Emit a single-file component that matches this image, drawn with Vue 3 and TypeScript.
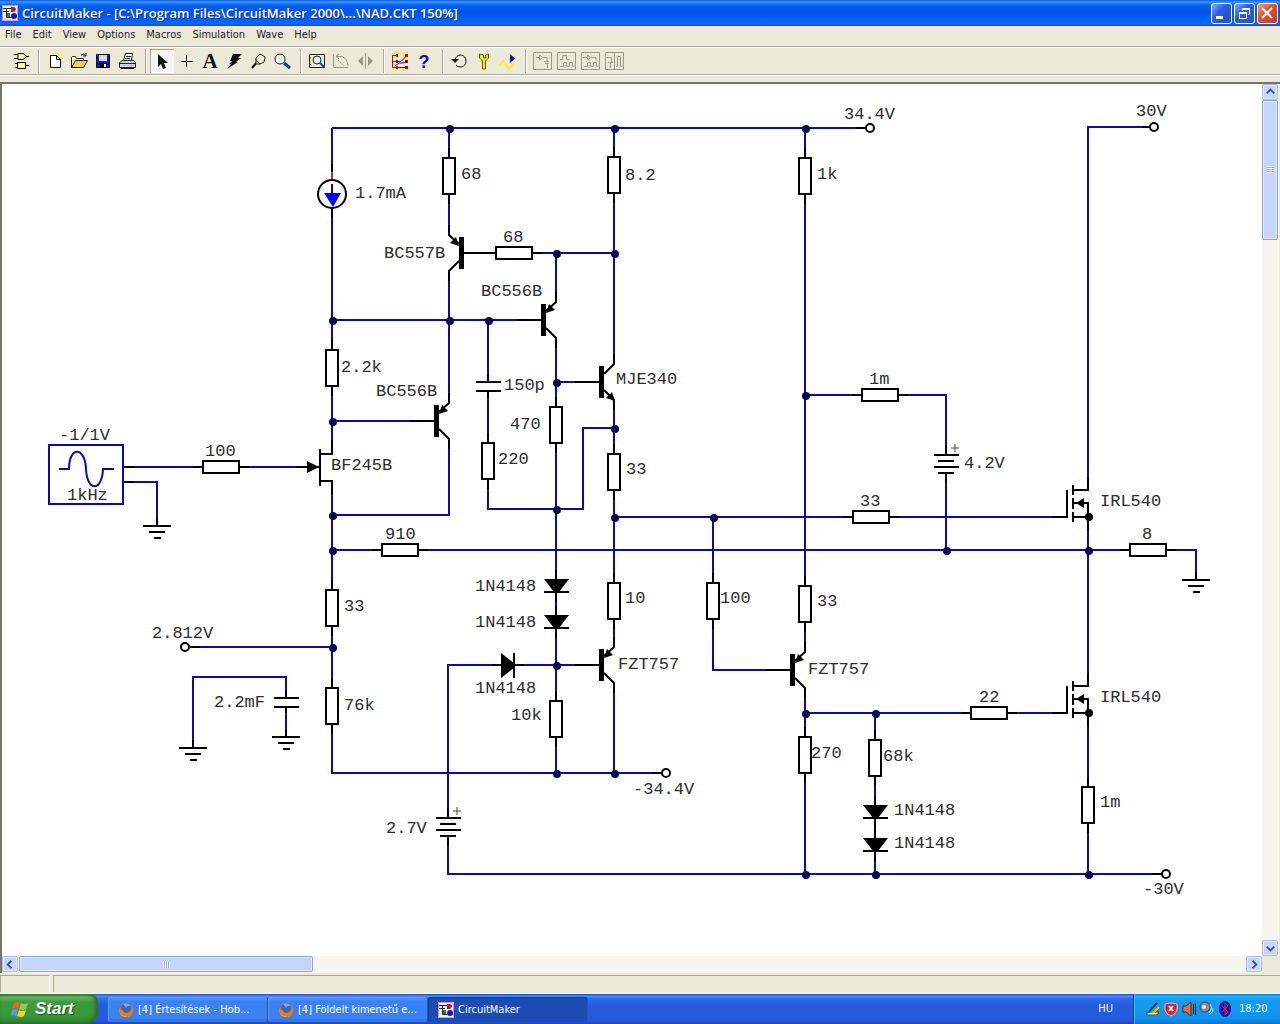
<script setup lang="ts">
type Point = [number, number]

interface Label {
  x: number
  y: number
  text: string
}

interface Tool {
  name: string
  art: string
  pressed?: boolean
}

const menus = ['File', 'Edit', 'View', 'Options', 'Macros', 'Simulation', 'Wave', 'Help']

const waveBox = '<path d="M3.5 3.5h18v17h-18z" fill="none" stroke="#9c9a8c"/>'

const toolGroups: Tool[][] = [
  [
    {
      name: 'Parts',
      art: '<g fill="#ffff9c" stroke="#000"><path d="M10 4.5h5l4 3-4 3h-5zM9.5 13.5h8v6h-8z"/><path fill="none" d="M6 5.5h4M6 9.5h4M19 7.5h2M7 14.5h2M7 18.5h2M18 16.5h3"/></g>',
    },
  ],
  [
    {
      name: 'New',
      art: '<path d="M8 4l3 1M18 4l-2 2M20 9l-2-1M5 9l2 1M6 17l2-1M19 17l-2-1M6 20l2-1" stroke="#ffff20" stroke-width="2"/><path d="M7.5 6.5h6l4 4v8h-10z" fill="#fff" stroke="#000"/><path d="M13.5 6.5v4h4" fill="none" stroke="#000"/>',
    },
    {
      name: 'Open',
      art: '<path d="M4.500 18.5v-10l1-1h3l1 2h7v2" fill="#ffff9c" stroke="#222"/><path d="M4.500 18.5l4-7h12l-4 7z" fill="#e0d858" stroke="#222"/><path d="M14 6q3-2 5 1m0-3v3h-3" fill="none" stroke="#222"/>',
    },
    {
      name: 'Save',
      art: '<path d="M5.5 5.5h13v13h-13z" fill="#1818b0" stroke="#000"/><path d="M8 6h8v6H8z" fill="#d8d8e8"/><path d="M9 14h7v4H9z" fill="#000"/><path d="M13 15h2v3h-2z" fill="#fff"/>',
    },
    {
      name: 'Print',
      art: '<path d="M8.5 11.5l2-7h7l-1 7z" fill="#fff" stroke="#222"/><path d="M11 7.5h5M10 9.5h5" stroke="#222"/><path d="M4.500 13.5l3-2h11l2 2v5h-16z" fill="#d0d0cc" stroke="#222"/><path d="M4 14.5h16M6 19.5h13" fill="none" stroke="#222"/><path d="M15 16.5h3" stroke="#d8c800"/>',
    },
  ],
  [
    { name: 'Select', pressed: true, art: '<path d="M8 5v13l3-3 2 5 3-1-2-5h4z" fill="#111"/>' },
    { name: 'Wire', art: '<path d="M12.5 6v12M7 12.500h12" stroke="#111"/>' },
    {
      name: 'Text',
      art: '<text x="12" y="19" text-anchor="middle" font-family="Liberation Serif, serif" font-size="21" font-weight="bold" fill="#111">A</text>',
    },
    { name: 'Delete', art: '<path d="M11 5h9l-4 4h3l-5 4h2L5 20l4-5H7l3-3H8z" fill="#111"/>' },
    {
      name: 'Probe',
      art: '<path d="M6 19l5-6" stroke="#111" stroke-width="2"/><path d="M10 13v-4l4-4 5 3-1 5-4 2h-4z" fill="#f4f2dc" stroke="#222"/><path d="M10 11l4 4" stroke="#222"/>',
    },
    {
      name: 'Zoom',
      art: '<circle cx="10" cy="10" r="5" fill="#ecf4f0" stroke="#222"/><path d="M14 14l6 5" stroke="#2030b0" stroke-width="3"/>',
    },
  ],
  [
    {
      name: 'Fit to window',
      art: '<path d="M4.500 5.5h15v13h-15zM4 8.5h2M4 15.5h2" fill="none" stroke="#222"/><circle cx="12" cy="11" r="4" fill="#ecf4f0" stroke="#222"/><path d="M15 14l4 4" stroke="#2a4a70" stroke-width="2"/>',
    },
    {
      name: 'Rotate',
      art: '<path d="M4.500 5v13.5h15M7 7.5h6q5 2 6 9M10 5L7 7.500 10 10" fill="none" stroke="#99978a"/><path d="M9 11l6 6" stroke="#99978a" stroke-dasharray="2 1"/>',
    },
    { name: 'Mirror', art: '<path d="M12.5 4v16" stroke="#99978a"/><path d="M10 7v10l-5-5zM15 7v10l5-5z" fill="#99978a"/>' },
  ],
  [
    {
      name: 'Digital mode',
      art: '<path d="M5 4.500l4-1 6 1 5-1M4 20l6-1 9 1M13 12l7-2" stroke="#ffe840" stroke-width="2" fill="none"/><path d="M10 6.500H4.500v12H10M4 12.500h5" stroke="#b01010" fill="none"/><path d="M8 6.500h2M8 12.500h2M8 18.500h2M17 6.500h3M17 12.500h3M17 18.500h3" stroke="#a01010" stroke-width="3"/><path d="M10 12.500l3 0 5-5M7 17l4-3h3l5-1M10 18.500h8" stroke="#1818a0" fill="none"/>',
    },
    {
      name: 'Help',
      art: '<text x="12" y="19" text-anchor="middle" font-family="Liberation Sans, sans-serif" font-size="18" font-weight="bold" fill="#1010a8">?</text>',
    },
  ],
  [
    {
      name: 'Reset',
      art: '<path d="M8 11q1-5 6-5 5 1 5 6t-5 6q-4 0-5-2" fill="none" stroke="#111"/><path d="M4 10h8l-4 4z" fill="#111"/>',
    },
    {
      name: 'Analyses',
      art: '<path d="M8.5 5v4l3 3v8h3v-8l3-3V5l-3 1v3h-2V6z" fill="#f4ee20" stroke="#5c5a10"/>',
    },
    {
      name: 'Run',
      art: '<path d="M4 17l4-5 6 8 5-5" fill="none" stroke="#fff020" stroke-width="2"/><path d="M15 5l5 4.500-5 4.500z" fill="#1010a0"/>',
    },
  ],
  [
    {
      name: 'Digital waveforms',
      art: waveBox + '<path d="M6 8.5h3M9.5 6v5l3-2.500zM13 8.5h4v4M14 12.5h5M17.5 14v5M15 14.5h4" fill="none" stroke="#9c9a8c"/>',
    },
    {
      name: 'Analog waveforms',
      art: waveBox + '<path d="M6 10.5h2.500v-4h4v4h3M6 17.5h3.500v-4h3v4h3v-4h3v4h2" fill="none" stroke="#9c9a8c"/>',
    },
    {
      name: 'Mixed waveforms',
      art: waveBox + '<path d="M5 8.5h4M9.5 6v5l3-2.500zM13 8.5h5v3M6 17.5h3.500v-4h3v4h3v-4h3v4h2" fill="none" stroke="#9c9a8c"/>',
    },
    {
      name: 'Split waveforms',
      art: waveBox + '<path d="M12.5 4v16M5 8.5h4.500v5M6 13.5h5M8.5 14v5M14 17.5h1.500v-10h3v10h2" fill="none" stroke="#9c9a8c"/>',
    },
  ],
]

const wires = [
  'M332 128H866', 'M332 128V454', 'M332 481V773H662', 'M449 128V235', 'M449 271V403', 'M449 439V515H332',
  'M614 128V364', 'M614 400V647', 'M614 683V773', 'M464 253H614', 'M556 253V302', 'M332 320H541',
  'M488 320V382', 'M488 391V509H583V428H614', 'M556 338V773', 'M556 382H600', 'M332 421H435',
  'M805 128V652', 'M805 688V874', 'M805 395H946V455', 'M946 473V550', 'M614 517H1067',
  'M332 550H1196V580', 'M124 467H319', 'M124 482H157V526', 'M190 647H332', 'M193 748V677H286V698',
  'M286 707V737', 'M448 818V665H600', 'M448 836V874H1162', 'M713 517V670H790', 'M805 713H1067',
  'M875 713V874', 'M1088 490V127H1150', 'M1088 517V686', 'M1088 713V874',
].join('')

const leads = [
  'M124 467h10', 'M124 482h10', 'M157 518v8', 'M193 740v8', 'M286 690v8', 'M286 707v6', 'M286 729v8',
  'M1196 572v8', 'M488 374v8', 'M488 391v8', 'M448 808v10', 'M448 836v10', 'M946 445v10', 'M946 473v10',
  'M332 164v16', 'M332 208v10', 'M190 647h10', 'M856 128h10', 'M1142 127h8', 'M652 773h10', 'M1152 874h10',
].join('')

const verticalResistors: Point[] = [
  [449, 176], [614, 175], [332, 368], [556, 425], [488, 461], [614, 472], [332, 608], [332, 706],
  [614, 601], [556, 719], [805, 176], [713, 601], [805, 604], [805, 755], [875, 758], [1088, 805],
]
const horizontalResistors: Point[] = [
  [514, 253], [400, 550], [221, 467], [880, 395], [871, 517], [989, 713], [1148, 550],
]
const junctions: Point[] = [
  [449, 128], [614, 128], [805, 128], [556, 253], [614, 253], [332, 320], [449, 320], [488, 320],
  [332, 421], [556, 382], [614, 428], [556, 509], [332, 515], [332, 550], [614, 517], [713, 517],
  [805, 395], [946, 550], [1088, 550], [332, 647], [556, 665], [805, 713], [875, 713],
  [556, 773], [614, 773], [805, 874], [875, 874], [1088, 874],
]
const pnpTransistors: Point[] = [[556, 320], [449, 421], [614, 665], [805, 670]]
const mosfets: Point[] = [[1088, 517], [1088, 713]]
const diodes: Point[] = [[556, 586], [556, 622], [875, 812], [875, 845]]
const grounds: Point[] = [[157, 526], [193, 748], [286, 737], [1196, 580]]
const capacitors: Point[] = [[488, 382], [286, 698]]
const batteries: Point[] = [[448, 818], [946, 455]]
const terminals: Point[] = [[870, 128], [1154, 127], [666, 773], [185, 647], [1166, 874]]

const labels: Label[] = [
  { x: 461, y: 179, text: '68' },
  { x: 625, y: 180, text: '8.2' },
  { x: 355, y: 198, text: '1.7mA' },
  { x: 384, y: 258, text: 'BC557B' },
  { x: 503, y: 242, text: '68' },
  { x: 481, y: 296, text: 'BC556B' },
  { x: 341, y: 372, text: '2.2k' },
  { x: 376, y: 396, text: 'BC556B' },
  { x: 504, y: 390, text: '150p' },
  { x: 510, y: 429, text: '470' },
  { x: 616, y: 384, text: 'MJE340' },
  { x: 498, y: 464, text: '220' },
  { x: 331, y: 470, text: 'BF245B' },
  { x: 626, y: 474, text: '33' },
  { x: 385, y: 539, text: '910' },
  { x: 344, y: 611, text: '33' },
  { x: 344, y: 710, text: '76k' },
  { x: 475, y: 591, text: '1N4148' },
  { x: 475, y: 627, text: '1N4148' },
  { x: 475, y: 693, text: '1N4148' },
  { x: 625, y: 603, text: '10' },
  { x: 618, y: 669, text: 'FZT757' },
  { x: 511, y: 720, text: '10k' },
  { x: 633, y: 794, text: '-34.4V' },
  { x: 386, y: 833, text: '2.7V' },
  { x: 59, y: 440, text: '-1/1V' },
  { x: 67, y: 500, text: '1kHz' },
  { x: 205, y: 456, text: '100' },
  { x: 152, y: 638, text: '2.812V' },
  { x: 214, y: 707, text: '2.2mF' },
  { x: 844, y: 119, text: '34.4V' },
  { x: 1136, y: 116, text: '30V' },
  { x: 817, y: 179, text: '1k' },
  { x: 869, y: 384, text: '1m' },
  { x: 964, y: 468, text: '4.2V' },
  { x: 860, y: 506, text: '33' },
  { x: 720, y: 603, text: '100' },
  { x: 817, y: 606, text: '33' },
  { x: 808, y: 674, text: 'FZT757' },
  { x: 1100, y: 506, text: 'IRL540' },
  { x: 1100, y: 702, text: 'IRL540' },
  { x: 1142, y: 539, text: '8' },
  { x: 979, y: 702, text: '22' },
  { x: 811, y: 758, text: '270' },
  { x: 883, y: 761, text: '68k' },
  { x: 894, y: 815, text: '1N4148' },
  { x: 894, y: 848, text: '1N4148' },
  { x: 1100, y: 807, text: '1m' },
  { x: 1143, y: 894, text: '-30V' },
]

const at = ([x, y]: Point): string => `translate(${x} ${y})`

const tasks = [
  { title: '[4] Értesítések - Hob...', app: 'firefox', active: false },
  { title: '[4] Földelt kimenetű e...', app: 'firefox', active: false },
  { title: 'CircuitMaker', app: 'circuit', active: true },
]

const appArt =
  '<path d="M0 0h16v16H0z" fill="#fdf0fa"/><path d="M.5.5h15v15H.5z" fill="none" stroke="#e090e0"/><path d="M1 3.5h9M1 6.5h6M4.500 3v9.500h5" fill="none" stroke="#222"/><path d="M9 2h3q4 2 0 5H9z" fill="#c01820"/><path d="M5 8h3v4H5z" fill="#207858"/><circle cx="12" cy="11" r="3" fill="#1818b0"/>'
const firefoxArt =
  '<circle cx="8" cy="8" r="7" fill="#e86a10"/><circle cx="8" cy="6" r="5" fill="#3468c8"/><path d="M5 2q5-2 8 2-4-1-5 2z" fill="#60b8f0"/><path d="M1 5q1 3 4 3 0 3 4 3 5 0 6-5 1 6-4 9-6 1-9-3Q0 9 1 5z" fill="#f07818"/><path d="M2 11q3 4 8 3-4 2-7-1z" fill="#f8d030"/>'
</script>

<template>
  <div class="desktop">
    <header class="title-bar">
      <svg class="app-icon" viewBox="0 0 16 16" v-html="appArt"></svg>
      <h1>CircuitMaker - [C:\Program Files\CircuitMaker 2000\...\NAD.CKT 150%]</h1>
      <div class="window-buttons">
        <button type="button" aria-label="Minimize">
          <svg viewBox="0 0 19 19"><path d="M4 12h7v3H4z" fill="#fff" /></svg>
        </button>
        <button type="button" aria-label="Restore">
          <svg viewBox="0 0 19 19" fill="none" stroke="#fff">
            <path d="M4.5 8.5h7v6h-7zM4 9.5h8M7.5 7V4.5h7v6H13M7 5.5h8" />
          </svg>
        </button>
        <button type="button" class="close" aria-label="Close">
          <svg viewBox="0 0 19 19"><path d="M4 4l10 10M14 4L4 14" stroke="#fff" stroke-width="2" /></svg>
        </button>
      </div>
    </header>

    <nav class="menu-bar">
      <button v-for="menu in menus" :key="menu" type="button">{{ menu }}</button>
    </nav>

    <div class="toolbar">
      <div v-for="(group, index) in toolGroups" :key="index" class="tool-group">
        <button
          v-for="tool in group"
          :key="tool.name"
          type="button"
          :class="{ pressed: tool.pressed }"
          :aria-label="tool.name"
        >
          <svg viewBox="0 0 24 24" v-html="tool.art"></svg>
        </button>
      </div>
    </div>

    <main class="workspace">
      <div class="sheet">
        <svg class="schematic" width="1260" height="860" viewBox="2 84 1260 860">
          <path :d="wires" class="wire" />
          <path :d="leads" class="ink" />

          <g v-for="(p, i) in verticalResistors" :key="`rv${i}`" :transform="at(p)" class="ink">
            <path d="M0 -28V28" />
            <rect x="-6" y="-18" width="12" height="36" fill="#fff" />
          </g>
          <g v-for="(p, i) in horizontalResistors" :key="`rh${i}`" :transform="at(p)" class="ink">
            <path d="M-28 0H28" />
            <rect x="-18" y="-6" width="36" height="12" fill="#fff" />
          </g>

          <!-- current source -->
          <path d="M332 172V180" stroke="#c83010" stroke-width="2" />
          <circle cx="332" cy="194" r="14" class="ink paper" />
          <path d="M332 184V196" stroke="#0000ff" stroke-width="2" />
          <path d="M324 193H341L333 207Z" fill="#0000ff" />

          <!-- signal generator -->
          <rect x="49" y="445" width="74" height="59" class="generator" />
          <path d="M59 469H69C69 446 85 446 86 469C87 492 102 492 103 469H114" class="generator" />

          <g class="ink" transform="translate(449 253)">
            <path d="M0 -28V-18L10 -9M10 8L0 18V28M15 0H39" />
            <path d="M10 -16H15V16H10Z" class="solid" />
            <path d="M10 -7L7 -16L1 -10Z" class="solid" />
          </g>
          <g v-for="(p, i) in pnpTransistors" :key="`q${i}`" :transform="at(p)" class="ink">
            <path d="M0 -28V-18L-10 -9M-10 8L0 18V28M-15 0H-39" />
            <path d="M-15 -16H-10V16H-15Z" class="solid" />
            <path d="M-10 -7L-7 -16L-1 -10Z" class="solid" />
          </g>
          <g class="ink" transform="translate(614 382)">
            <path d="M0 -28V-18L-10 -8M-10 8L0 18V28M-15 0H-39" />
            <path d="M-15 -16H-10V16H-15Z" class="solid" />
            <path d="M1 19L-2 10L-8 16Z" class="solid" />
          </g>

          <g class="ink">
            <path d="M320 449V486M332 440V454H320M320 481H332V495M296 467H320" />
            <path d="M307 461L319 467L307 473Z" class="solid" />
          </g>
          <g v-for="(p, i) in mosfets" :key="`m${i}`" :transform="at(p)" class="ink">
            <path d="M-35 0H-21V-27M0 -40V-27H-15M-15 -32V-22M-15 -19V-8M-15 -5V5M-15 -14H0V14M-15 0H0" />
            <path d="M-12 -14L-4 -19V-9Z" class="solid" />
            <circle cx="1" cy="0" r="4" class="solid" />
          </g>

          <g v-for="(p, i) in diodes" :key="`d${i}`" :transform="at(p)" class="ink">
            <path d="M0 -16V16M-12 6H13" />
            <path d="M-12 -7H13L3 6H-2Z" class="solid" />
          </g>
          <g class="ink" transform="translate(508 665)">
            <path d="M-16 0H16M6 -12V13" />
            <path d="M-7 -12V13L6 3V-2Z" class="solid" />
          </g>

          <path
            v-for="(p, i) in grounds"
            :key="`g${i}`"
            :transform="at(p)"
            d="M-14 0H14M-8 6H8M-3 12H4"
            class="ink"
          />
          <path v-for="(p, i) in capacitors" :key="`c${i}`" :transform="at(p)" d="M-12 0H13M-12 9H13" class="ink" />
          <g v-for="(p, i) in batteries" :key="`b${i}`" :transform="at(p)">
            <path d="M-12 0H13M-8 6H8M-12 12H13M-8 18H8" class="ink" />
            <path d="M5 -7H13M9 -11V-3" stroke="#444" />
          </g>

          <circle v-for="(p, i) in junctions" :key="`j${i}`" :cx="p[0] + 1" :cy="p[1] + 1" r="4" class="junction" />
          <circle v-for="(p, i) in terminals" :key="`t${i}`" :cx="p[0]" :cy="p[1]" r="4" class="ink paper" />

          <text v-for="(label, i) in labels" :key="`l${i}`" :x="label.x" :y="label.y">{{ label.text }}</text>
        </svg>
      </div>

      <div class="scrollbar vertical">
        <button type="button" aria-label="Scroll up">
          <svg viewBox="0 0 15 15"><path d="M4 9l4-4 4 4" /></svg>
        </button>
        <div class="thumb"><i></i></div>
        <button type="button" aria-label="Scroll down">
          <svg viewBox="0 0 15 15"><path d="M4 6l4 4 4-4" /></svg>
        </button>
      </div>
      <div class="scrollbar horizontal">
        <button type="button" aria-label="Scroll left">
          <svg viewBox="0 0 15 15"><path d="M9 4L5 8l4 4" /></svg>
        </button>
        <div class="thumb"><i></i></div>
        <button type="button" aria-label="Scroll right">
          <svg viewBox="0 0 15 15"><path d="M6 4l4 4-4 4" /></svg>
        </button>
      </div>
    </main>

    <div class="status-bar">
      <span class="coords"></span>
      <span class="message"></span>
    </div>

    <footer class="taskbar">
      <button type="button" class="start">
        <svg viewBox="0 0 18 18">
          <path d="M3 3q3-2 6 0L7 9q-3-2-6 0z" fill="#f0602c" />
          <path d="M10 3q3 2 7 0l-2 6q-3 2-7 0z" fill="#8cd048" />
          <path d="M1 10q3-2 6 0l-2 6q-3-2-5 0z" fill="#5c94f0" />
          <path d="M8 10q3 2 7 0l-2 6q-3 2-7 0z" fill="#f8d030" />
        </svg>
        Start
      </button>
      <div class="tasks">
        <button v-for="task in tasks" :key="task.title" type="button" :class="{ active: task.active }">
          <svg viewBox="0 0 16 16" v-html="task.app === 'circuit' ? appArt : firefoxArt"></svg>
          <span>{{ task.title }}</span>
        </button>
      </div>
      <span class="language">HU</span>
      <div class="tray">
        <svg viewBox="0 0 16 16">
          <path d="M1 13l3-2h10l-2 3H3z" fill="#e8e4d0" stroke="#444" />
          <path d="M4 11L12 2" stroke="#202090" stroke-width="2" />
          <path d="M6 11l7-7" stroke="#30b030" stroke-width="2" />
          <path d="M8 12l6-6" stroke="#e8c020" stroke-width="2" />
          <path d="M10 12l4-4" stroke="#e03020" />
        </svg>
        <svg viewBox="0 0 16 16">
          <path d="M2 3l6-1 6 1v6q-1 4-6 6-5-2-6-6z" fill="#d82028" stroke="#f4b8b8" />
          <path d="M6 5l4 5M10 5l-4 5" stroke="#fff" stroke-width="2" />
        </svg>
        <svg viewBox="0 0 16 16">
          <path d="M2 5h3l5-4v14l-5-4H2z" fill="#e87040" stroke="#502818" />
          <path d="M12.5 3v10M14.5 2v12" stroke="#402020" />
        </svg>
        <svg viewBox="0 0 16 16">
          <circle cx="6" cy="6" r="5" fill="#8c8c90" stroke="#444" />
          <circle cx="5" cy="6" r="2" fill="#e8e8e8" />
          <path d="M11 3q3 4-1 9M14 7q1 4-4 7" fill="none" stroke="#c8d8e8" />
        </svg>
        <svg viewBox="0 0 16 16">
          <ellipse cx="8" cy="8" rx="6" ry="8" fill="#1818b0" />
          <path d="M5 5l6 6-3 3V2l3 3-6 6" fill="none" stroke="#e02040" stroke-width="1" />
        </svg>
        <time>18:20</time>
      </div>
    </footer>
  </div>
</template>

<style>
body {
  margin: 0;
}
</style>

<style scoped>
.desktop {
  display: flex;
  flex-direction: column;
  min-height: 100vh;
  background: #ece9d8;
  color: #222;
  font: 11px/14px "DejaVu Sans Condensed", "DejaVu Sans", sans-serif;
}

button {
  margin: 0;
  padding: 0;
  border: 0;
  background: none;
  color: inherit;
  font: inherit;
}

svg {
  display: block;
}

.title-bar {
  display: flex;
  align-items: center;
  box-sizing: border-box;
  height: 26px;
  padding: 0 2px;
  background: linear-gradient(#0a5ce0 0, #3a94ff 2px, #0a62f0 5px, #0054e3 12px, #0562fb 20px, #0868ff 24px, #0848c8 26px);
}

.app-icon {
  width: 16px;
  height: 16px;
}

.title-bar h1 {
  flex: 1;
  margin: 0 0 0 4px;
  overflow: hidden;
  color: #fff;
  font: 600 13px/18px "Open Sans", sans-serif;
  text-shadow: 1px 1px 0 #0c2c88;
  white-space: nowrap;
}

.window-buttons {
  display: flex;
  gap: 2px;
}

.window-buttons button {
  box-sizing: border-box;
  width: 21px;
  height: 21px;
  border: 1px solid #fff;
  border-radius: 3px;
  background: linear-gradient(135deg, #88a8f4, #2c60dc 40%, #2450cc);
}

.window-buttons .close {
  background: linear-gradient(135deg, #f0a088, #e05430 40%, #c83c18);
}

.menu-bar {
  display: flex;
  height: 20px;
  border-bottom: 1px solid #aca899;
}

.menu-bar button {
  padding: 0 6px 2px 5px;
}

.toolbar {
  display: flex;
  align-items: center;
  height: 26px;
  padding-left: 8px;
  border-top: 1px solid #fff;
  border-bottom: 1px solid #aca899;
  box-shadow: 0 1px 0 #fff;
}

.tool-group {
  display: flex;
}

.tool-group + .tool-group {
  margin-left: 6px;
  padding-left: 4px;
  border-left: 1px solid #aca899;
  box-shadow: inset 1px 0 0 #fff;
}

.tool-group button {
  box-sizing: border-box;
  width: 24px;
  height: 24px;
}

.tool-group svg {
  width: 24px;
  height: 24px;
}

.tool-group .pressed {
  background: #f6f4ee;
  box-shadow: inset 1px 1px 0 #aca899, inset -1px -1px 0 #fff;
}

.workspace {
  display: grid;
  flex: 1;
  grid-template-columns: minmax(0, 1fr) 17px;
  grid-template-rows: 1fr 17px;
  margin: 7px 0 2px;
  border: solid #77756a;
  border-width: 2px 0 0 2px;
  padding-right: 1px;
}

.sheet {
  overflow: hidden;
  background: #fff;
}

.wire,
.generator {
  fill: none;
  stroke: #0a0aa8;
  stroke-width: 2;
}

.generator {
  stroke: #0808b8;
}

.ink {
  fill: none;
  stroke: #000;
  stroke-width: 2;
}

.paper {
  fill: #fff;
}

.solid {
  fill: #000;
  stroke: none;
}

.junction {
  fill: #06064c;
}

.schematic text {
  fill: #2c2c2c;
  font: 17px "Liberation Mono", monospace;
}

.scrollbar {
  display: flex;
  background: #f6f5ef;
}

.vertical {
  flex-direction: column;
}

.scrollbar button,
.thumb {
  box-sizing: border-box;
  flex: none;
  border: 1px solid #a8bcf0;
  border-radius: 2px;
  background: #c6d5fc;
  box-shadow: inset 0 0 0 1px #e4ecff;
}

.scrollbar button {
  width: 16px;
  height: 16px;
}

.scrollbar button svg {
  width: 14px;
  height: 14px;
  fill: none;
  stroke: #3c5488;
  stroke-width: 2;
}

.vertical button:last-child {
  margin-top: auto;
}

.horizontal button:last-child {
  margin-left: auto;
}

.thumb {
  display: flex;
  align-items: center;
  justify-content: center;
  border-color: #88a4e0;
}

.vertical .thumb {
  width: 16px;
  height: 16%;
}

.horizontal .thumb {
  width: 294px;
  height: 16px;
  margin-left: 1px;
}

.thumb i {
  width: 7px;
  height: 7px;
}

.vertical .thumb i {
  background: repeating-linear-gradient(#f4f8ff 0 1px, #98b0e8 1px 2px);
}

.horizontal .thumb i {
  background: repeating-linear-gradient(90deg, #f4f8ff 0 1px, #98b0e8 1px 2px);
}

.status-bar {
  display: flex;
  gap: 3px;
  height: 17px;
  padding-bottom: 1px;
  border-bottom: 1px solid #fff;
}

.status-bar span {
  border-top: 1px solid #aca899;
  border-left: 1px solid #aca899;
}

.coords {
  width: 48px;
  border-right: 1px solid #fff;
}

.message {
  flex: 1;
}

.taskbar {
  display: flex;
  align-items: stretch;
  height: 30px;
  background: linear-gradient(#1c48b0 0, #4490f4 2px, #2c6cec 5px, #245cdc 12px, #245cdc 26px, #1c48b8 30px);
  color: #fff;
}

.start {
  display: flex;
  align-items: center;
  gap: 6px;
  box-sizing: border-box;
  width: 98px;
  padding-left: 11px;
  border-radius: 0 8px 12px 0;
  background: linear-gradient(#2c7c2c 0, #64b864 3px, #3c9c3c 8px, #389838 22px, #2c7c2c 30px);
  box-shadow: inset -3px 0 4px #286c28;
  font: italic bold 17px/20px "Liberation Sans", sans-serif;
  text-shadow: 1px 1px 1px #1c4c1c;
}

.start svg {
  width: 18px;
  height: 18px;
}

.tasks {
  display: flex;
  flex: 1;
  margin-left: 10px;
  padding: 3px 0 2px;
}

.tasks button {
  display: flex;
  align-items: center;
  gap: 4px;
  box-sizing: border-box;
  width: 160px;
  padding-left: 10px;
  border-right: 1px solid #2054c4;
  border-radius: 3px;
  background: linear-gradient(#5c9cfc 0, #3c80f4 4px, #3c80f4 21px, #3070e0 25px);
  box-shadow: inset 1px 1px 0 #5c9cfc;
}

.tasks .active {
  background: #1c4cb4;
  box-shadow: inset 1px 1px 1px #143c90;
}

.tasks svg {
  width: 16px;
  height: 16px;
}

.language {
  align-self: center;
  padding-right: 20px;
}

.tray {
  display: flex;
  align-items: center;
  gap: 2px;
  box-sizing: border-box;
  width: 147px;
  padding-left: 11px;
  border-left: 1px solid #0c3c9c;
  background: linear-gradient(#0c64c8 0, #28b0f8 2px, #149cf0 6px, #1294ec 24px, #0c74cc 30px);
  box-shadow: inset 1px 0 0 #3cc0f8;
}

.tray svg {
  width: 16px;
  height: 16px;
}

.tray time {
  margin-left: 4px;
}
</style>
